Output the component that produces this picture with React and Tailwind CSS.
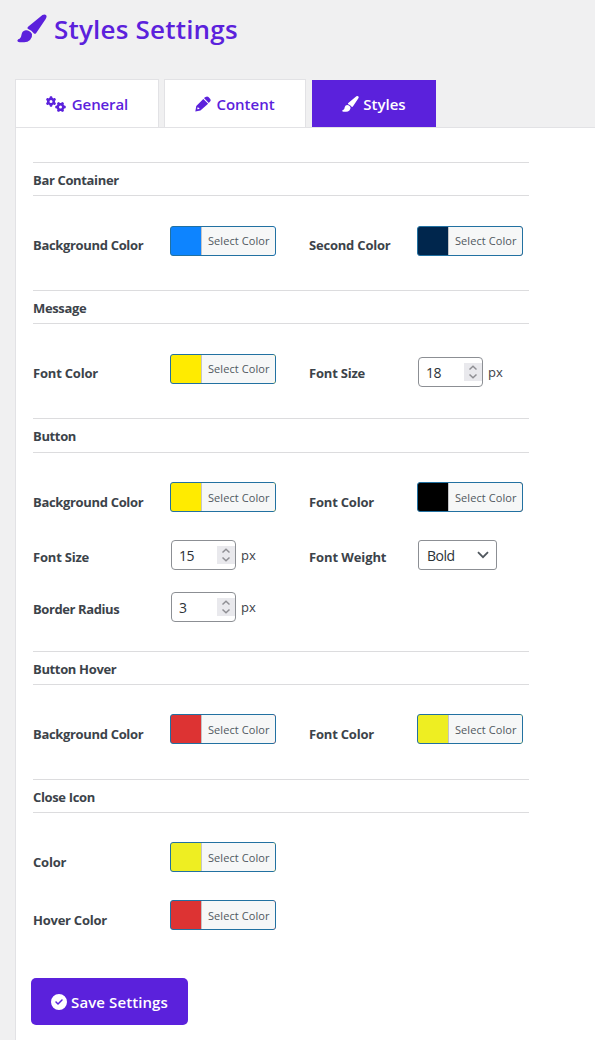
import React from "react";
import { FaGears, FaCircleCheck } from "react-icons/fa6";

function BrushIcon({ className }) {
  return (
    <svg className={className} viewBox="0 0 92 87" fill="currentColor">
      <path d="M78 2Q86-2 90 4Q92 8 88 14L59 57Q56 61 52 59Q45 49 34 45Q30 42 34 38Z" />
      <path d="M27 49Q38 48 46 60Q48 69 40 79Q33 86 22 86H8Q1 85 1 80Q3 76 8 75Q13 72 14 62Q16 50 27 49Z" />
    </svg>
  );
}

function PencilIcon({ className }) {
  return (
    <svg className={className} viewBox="0 0 50 49" fill="currentColor">
      <path d="M33 3Q38-1 42 3L47 8Q51 13 47 17L43 21L28 6Z" />
      <path fillRule="evenodd" d="M26 8.500L41 23.500L17 45L1 48L4 31ZM8 35L7 41L13 40L14 37L11 36Z" />
    </svg>
  );
}

function Section({ title, headClass = "h-[34px]", bodyClass, children }) {
  return (
    <section className="w-[496px]">
      <h2 className={`${headClass} flex items-center border-y border-[#dcdcde] pt-[3px] text-[13px] font-bold text-[#3c434a]`}>
        <span className="tracking-[-0.35px]">{title}</span>
      </h2>
      <div className={bodyClass}>{children}</div>
    </section>
  );
}

function Row({ className = "h-[30px]", children }) {
  return <div className={`${className} grid grid-cols-[137px_139px_108px_112px] items-start`}>{children}</div>;
}

function Label({ className = "pt-[10px] tracking-[-0.2px]", children }) {
  return (
    <label className={`${className} whitespace-nowrap text-[13px] leading-[18px] font-bold text-[#3c434a]`}>
      {children}
    </label>
  );
}

function ColorButton({ swatch, textClass = "leading-[28px]" }) {
  return (
    <button className={`${swatch} flex h-[30px] w-[106px] overflow-hidden rounded-[3px] border border-[#2271a1]`}>
      <span className={`${textClass} ml-[30px] h-[28px] w-[74px] border-l border-[#c3c4c7] bg-[#f6f7f7] pl-[6px] text-left text-[11px] tracking-[0.08px] whitespace-nowrap text-[#50575e]`}>
        Select Color
      </span>
    </button>
  );
}

function NumberField({ value, className = "" }) {
  return (
    <div className={`${className} ml-px flex items-center text-[14px] text-[#3c434a]`}>
      <div className="flex h-[30px] w-[65px] items-center justify-between rounded-[4px] border border-[#8c8f94] bg-white pl-[7px] text-[#2c3338]">
        <span className="tracking-[-0.4px]">{value}</span>
        <span className="flex h-[18px] w-[18px] items-center justify-center bg-[#e9e9ed]">
          <svg width="10" height="14" viewBox="0 0 10 14" fill="none" stroke="#8f8f94" strokeWidth="1.5">
            <path d="M1.5 4.5 5 1.2 8.5 4.5M1.5 9.5 5 12.8 8.5 9.5" />
          </svg>
        </span>
      </div>
      <span className="ml-[5px] pt-[2px] text-[13px]">px</span>
    </div>
  );
}

function SelectField({ value }) {
  return (
    <div className="ml-px flex h-[30px] w-[79px] items-center justify-between rounded-[3px] border border-[#8c8f94] bg-white pr-[7px] pl-[8px] text-[14px] text-[#2c3338]">
      <span className="tracking-[-0.5px]">{value}</span>
      <svg width="12" height="8" viewBox="0 0 12 8" fill="none" stroke="#50575e" strokeWidth="1.8">
        <path d="M1 1.2 6 6.2 11 1.2" />
      </svg>
    </div>
  );
}

export default function App() {
  return (
    <div className="flex h-[1040px] w-[595px] flex-col overflow-hidden bg-[#f0f0f1] font-['Open_Sans','Noto_Sans',sans-serif]">
      <header className="flex h-[79px] shrink-0 pl-[17px] text-[#5b21dc]">
        <BrushIcon className="mt-[14px] h-[29px] w-[30px]" />
        <h1 className="ml-[7px] pt-[11px] text-[26px] leading-[36px] font-semibold tracking-[0.2px] whitespace-nowrap">Styles Settings</h1>
      </header>

      <nav className="ml-[15px] flex h-[48px] shrink-0 gap-[5px] text-[15px] font-semibold text-[#5b21dc]">
        <a className="flex w-[144px] items-center justify-center gap-[6px] border border-b-0 border-[#e2e2e5] bg-white pt-[2px]">
          <FaGears className="mb-[2px] h-[16px] w-[20px]" />
          <span className="tracking-[-0.1px]">General</span>
        </a>
        <a className="flex w-[142px] items-center justify-center gap-[5px] border border-b-0 border-[#e2e2e5] bg-white pt-[2px]">
          <PencilIcon className="mb-px h-[16px] w-[16px]" />
          <span>Content</span>
        </a>
        <a className="mt-px ml-px flex w-[124px] items-center justify-center gap-[4px] bg-[#5b21dc] pt-px text-white">
          <BrushIcon className="h-[16px] w-[17px]" />
          <span>Styles</span>
        </a>
      </nav>

      <main className="ml-[15px] flex-1 border-t border-l border-[#e2e2e5] bg-white pt-[34px] pl-[17px]">
        <Section title="Bar Container" bodyClass="h-[94px] pt-[30px]">
          <Row>
            <Label className="pt-[10px] tracking-[-0.33px]">Background Color</Label>
            <ColorButton swatch="bg-[#0d84ff]" />
            <Label>Second Color</Label>
            <ColorButton swatch="bg-[#00264d]" />
          </Row>
        </Section>

        <Section title="Message" bodyClass="h-[94px] pt-[30px]">
          <Row>
            <Label>Font Color</Label>
            <ColorButton swatch="bg-[#ffeb00]" />
            <Label>Font Size</Label>
            <NumberField value="18" className="mt-[3px]" />
          </Row>
        </Section>

        <Section title="Button" headClass="h-[35px]" bodyClass="h-[198px] pt-[29px]">
          <Row className="h-[58px]">
            <Label className="pt-[11px] tracking-[-0.33px]">Background Color</Label>
            <ColorButton swatch="bg-[#ffeb00]" textClass="leading-[30px]" />
            <Label className="pt-[11px] tracking-[-0.2px]">Font Color</Label>
            <ColorButton swatch="bg-black" textClass="leading-[30px]" />
          </Row>
          <Row className="h-[52px]">
            <Label className="pt-[8px] tracking-[-0.2px]">Font Size</Label>
            <NumberField value="15" />
            <Label className="pt-[8px] tracking-[-0.1px]">Font Weight</Label>
            <SelectField value="Bold" />
          </Row>
          <Row>
            <Label className="pt-[8px] tracking-[-0.4px]">Border Radius</Label>
            <NumberField value="3" />
          </Row>
        </Section>

        <Section title="Button Hover" bodyClass="h-[94px] pt-[29px]">
          <Row>
            <Label className="pt-[11px] tracking-[-0.33px]">Background Color</Label>
            <ColorButton swatch="bg-[#dd3333]" textClass="leading-[30px]" />
            <Label className="pt-[11px] tracking-[-0.2px]">Font Color</Label>
            <ColorButton swatch="bg-[#eeee22]" textClass="leading-[30px]" />
          </Row>
        </Section>

        <Section title="Close Icon" bodyClass="h-[165px] pt-[29px]">
          <Row className="h-[58px]">
            <Label className="pt-[11px] tracking-[-0.2px]">Color</Label>
            <ColorButton swatch="bg-[#eeee22]" textClass="leading-[30px]" />
          </Row>
          <Row>
            <Label className="pt-[11px] tracking-[-0.25px]">Hover Color</Label>
            <ColorButton swatch="bg-[#dd3333]" textClass="leading-[30px]" />
          </Row>
        </Section>

        <button className="-ml-[2px] flex h-[47px] w-[157px] items-center justify-center gap-[4px] rounded-[5px] bg-[#5b21dc] pt-px text-[15px] font-semibold whitespace-nowrap text-white">
          <FaCircleCheck className="h-[16px] w-[16px]" />
          <span className="tracking-[0.1px]">Save Settings</span>
        </button>
      </main>
    </div>
  );
}
